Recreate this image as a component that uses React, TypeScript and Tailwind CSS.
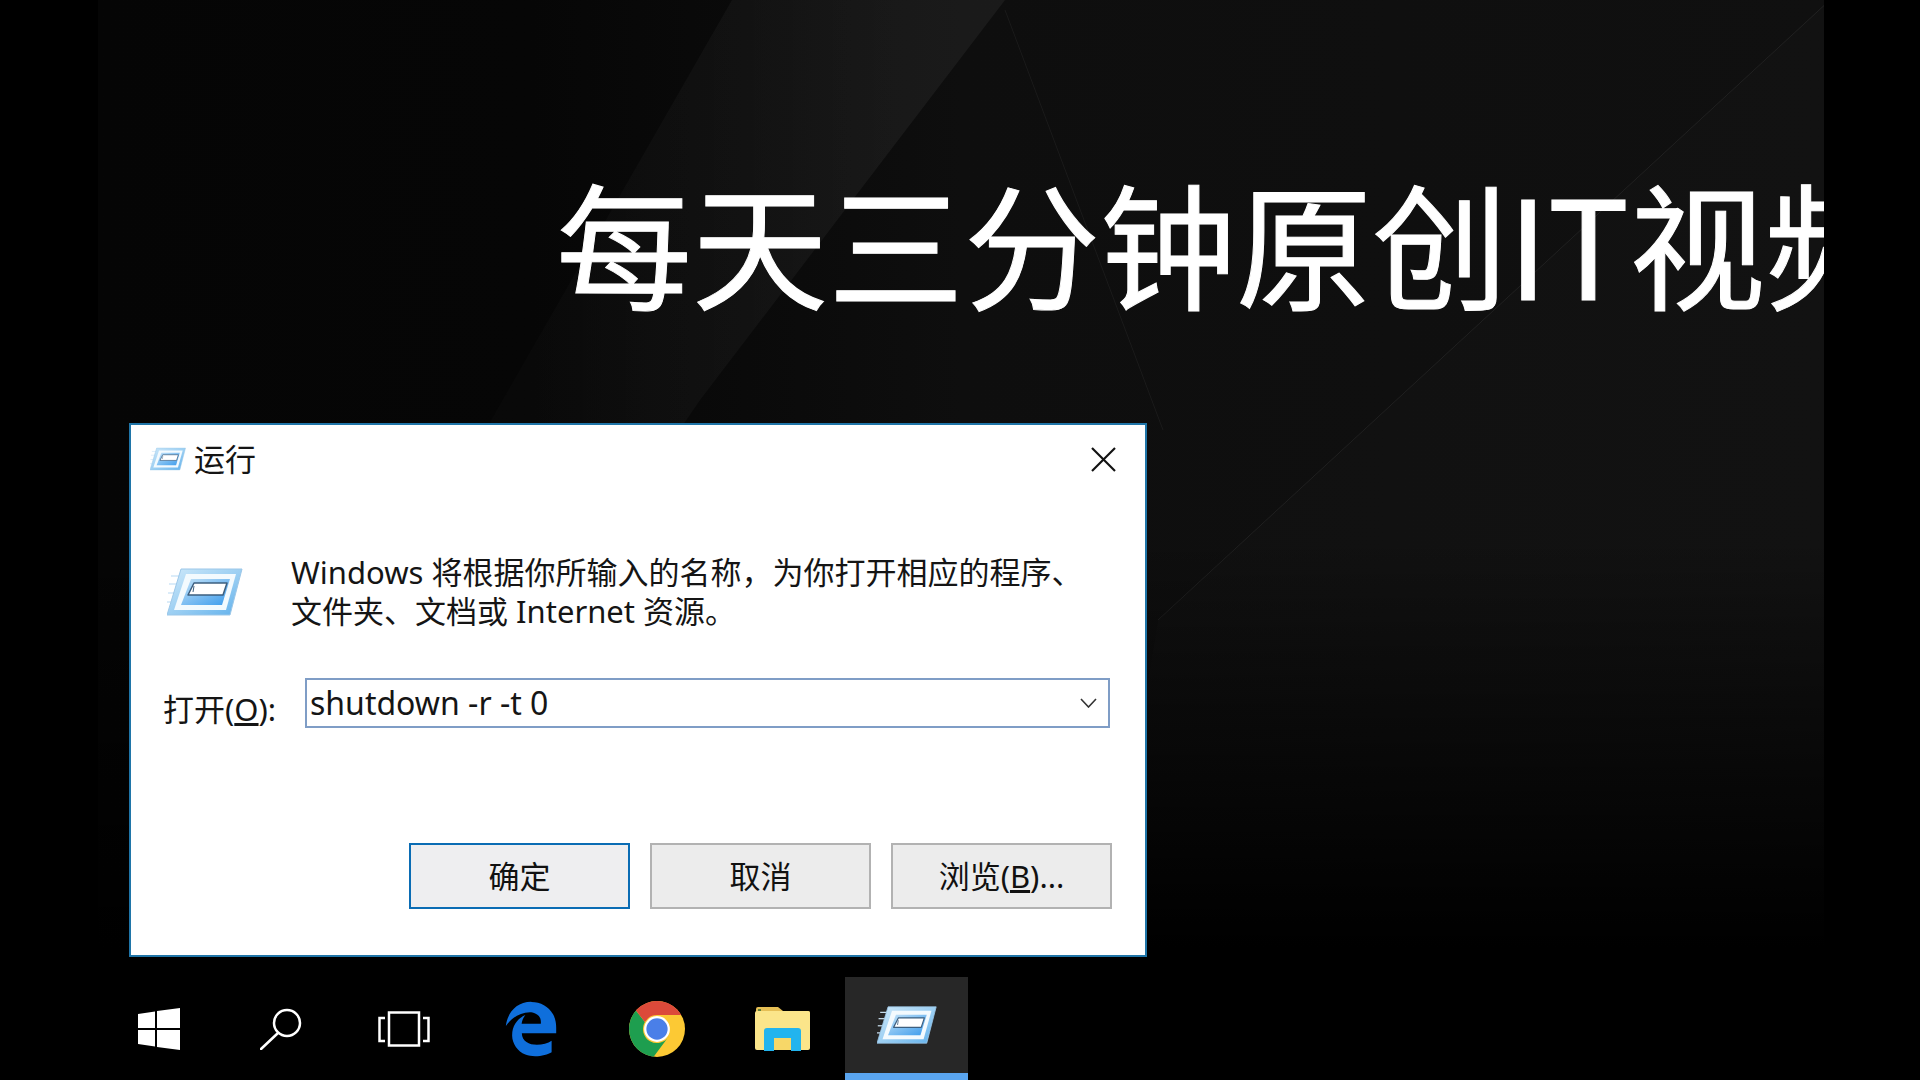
import { FaEdgeLegacy } from "react-icons/fa6";

const uiFont = "font-['Noto_Sans','Noto_Sans_CJK_SC',sans-serif]";

function Wallpaper() {
  return (
    <svg className="absolute inset-0 h-full w-full" viewBox="0 0 1726 977" aria-hidden>
      <defs>
        <linearGradient id="base" x1="0" x2="1" y1="0" y2="0">
          <stop offset="0" stopColor="#050505" />
          <stop offset="0.25" stopColor="#060606" />
          <stop offset="0.5" stopColor="#0e0e0e" />
          <stop offset="1" stopColor="#101010" />
        </linearGradient>
        <linearGradient id="beam" gradientUnits="userSpaceOnUse" x1="420" y1="200" x2="800" y2="200">
          <stop offset="0" stopColor="#fff" stopOpacity="0.012" />
          <stop offset="0.5" stopColor="#fff" stopOpacity="0.03" />
          <stop offset="1" stopColor="#fff" stopOpacity="0.05" />
        </linearGradient>
        <linearGradient id="fade" x1="0" x2="0" y1="0" y2="1">
          <stop offset="0.55" stopColor="#000" stopOpacity="0" />
          <stop offset="0.97" stopColor="#000" stopOpacity="1" />
        </linearGradient>
      </defs>
      <rect width="1726" height="977" fill="url(#base)" />
      <polygon points="634,0 907,0 602,400 520,520 340,520 395,417" fill="url(#beam)" />
      <polygon points="1732,0 1726,977 1000,977 1060,620" fill="#fff" fillOpacity="0.012" />
      <line x1="907" y1="10" x2="1065" y2="430" stroke="#fff" strokeOpacity="0.05" />
      <line x1="1732" y1="0" x2="1060" y2="620" stroke="#fff" strokeOpacity="0.07" />
      <rect width="1726" height="977" fill="url(#fade)" />
    </svg>
  );
}

function RunIcon({ className, id }: { className: string; id: string }) {
  return (
    <svg className={className} viewBox="0 0 76 48" aria-hidden>
      <defs>
        <linearGradient id={id} x1="0" x2="1" y1="0" y2="1">
          <stop offset="0" stopColor="#cfe9fa" />
          <stop offset="0.55" stopColor="#98cdf2" />
          <stop offset="1" stopColor="#5fb0ec" />
        </linearGradient>
        <linearGradient id={`${id}-in`} x1="0" x2="1" y1="0" y2="1">
          <stop offset="0" stopColor="#c4e3f8" />
          <stop offset="1" stopColor="#3b9bec" />
        </linearGradient>
      </defs>
      <g stroke="#cfe6f7" strokeWidth="1.5">
        <line x1="4" y1="8" x2="16" y2="8" />
        <line x1="2" y1="16" x2="13" y2="16" />
        <line x1="1" y1="25" x2="9" y2="25" />
        <line x1="0" y1="34" x2="6" y2="34" />
      </g>
      <polygon points="14,1 75,1 63,47 0,47" fill={`url(#${id})`} stroke="#9cc7e8" />
      <polygon points="19,6 69,6 59,42 7,42" fill="#f3fafe" />
      <polygon points="24,11 63,11 55,37 14,37" fill={`url(#${id}-in)`} />
      <polygon points="27,15 60,15 56,27 21,27" fill="#fff" stroke="#3d5f7f" strokeWidth="1.5" strokeLinejoin="round" />
      <line x1="27" y1="18" x2="26" y2="24" stroke="#3d5f7f" />
    </svg>
  );
}

function WindowsIcon() {
  return (
    <svg className="h-[42px] w-[42px]" viewBox="0 0 42 42" fill="#fff" aria-hidden>
      <polygon points="0,6 17,3.5 17,20 0,20" />
      <polygon points="19,3 42,0 42,20 19,20" />
      <polygon points="0,22 17,22 17,38.5 0,36" />
      <polygon points="19,22 42,22 42,42 19,39" />
    </svg>
  );
}

function SearchIcon() {
  return (
    <svg className="h-[42px] w-[42px]" viewBox="0 0 42 42" fill="none" stroke="#fff" strokeWidth="2.5" aria-hidden>
      <circle cx="27" cy="15" r="13" />
      <line x1="18" y1="25" x2="1" y2="41" strokeLinecap="round" />
    </svg>
  );
}

function TaskViewIcon() {
  return (
    <svg className="h-[36px] w-[52px]" viewBox="0 0 52 36" fill="none" stroke="#fff" strokeWidth="2.5" aria-hidden>
      <rect x="11" y="1.5" width="30" height="33" />
      <path d="M7 7H1.5V30H7" />
      <path d="M45 7H50.5V30H45" />
    </svg>
  );
}

function ChromeIcon() {
  return (
    <svg className="h-[56px] w-[56px]" viewBox="0 0 100 100" aria-hidden>
      <circle cx="50" cy="50" r="50" fill="#fcc934" />
      <path d="M12.5 17L28.3 37.5A25 25 0 0 0 71.65 62.5L44 99.6A50 50 0 0 1 12.5 17Z" fill="#1e9e4f" />
      <path d="M12.5 17A50 50 0 0 1 93.3 25L50 25A25 25 0 0 0 28.3 37.5Z" fill="#dc4a3a" />
      <circle cx="50" cy="50" r="23" fill="#fff" />
      <circle cx="50" cy="50" r="19" fill="#4a7fe8" />
    </svg>
  );
}

function FolderIcon() {
  return (
    <svg className="h-[44px] w-[55px]" viewBox="0 0 55 44" aria-hidden>
      <path d="M1 2Q1 0 3 0H23L28 4H53Q55 4 55 6V12H1Z" fill="#e6bf55" />
      <rect x="0" y="4" width="55" height="39" rx="2" fill="#fbe58a" />
      <path d="M9 44V24Q9 21 12 21H43Q46 21 46 24V44H36V31H19V44Z" fill="#22b4ee" />
      <rect x="19" y="31" width="17" height="12" fill="#f7d768" />
      <rect x="3" y="2" width="3" height="2" fill="#5f7f3a" />
    </svg>
  );
}

function TaskbarItem({ width, active, children }: { width: string; active?: boolean; children: React.ReactNode }) {
  return (
    <div className={`flex h-full items-center justify-center ${width} ${active ? "border-b-[7px] border-[#5aa5ef] bg-[#272727]" : ""}`}>
      {children}
    </div>
  );
}

function DialogButton({ children, primary }: { children: React.ReactNode; primary?: boolean }) {
  return (
    <button
      type="button"
      className={`flex h-[66px] w-[221px] items-center justify-center border-2 text-[31px] text-[#111] ${
        primary ? "border-[#0a6cb4] bg-[#eeeef0]" : "border-[#b2b2b2] bg-[#ececec]"
      }`}
    >
      {children}
    </button>
  );
}

function RunDialog() {
  return (
    <div className={`ml-[31px] flex h-[534px] w-[1018px] shrink-0 flex-col border-2 border-[#1f75a8] bg-white text-[#151515] ${uiFont}`}>
      <div className="flex h-[68px] shrink-0 items-center justify-between pl-[19px] pr-[29px]">
        <div className="flex items-center gap-2">
          <RunIcon id="run-small" className="h-[24px] w-[36px]" />
          <span className="text-[31px] leading-none">运行</span>
        </div>
        <svg className="h-[25px] w-[25px]" viewBox="0 0 25 25" stroke="#111" strokeWidth="2.2" aria-hidden>
          <line x1="1" y1="1" x2="24" y2="24" />
          <line x1="24" y1="1" x2="1" y2="24" />
        </svg>
      </div>

      <div className="mt-[60px] flex items-center gap-[48px] pl-[36px]">
        <RunIcon id="run-large" className="h-[48px] w-[76px] shrink-0" />
        <p className="text-[31px] leading-[39px]">
          Windows 将根据你所输入的名称，为你打开相应的程序、
          <br />
          文件夹、文档或 Internet 资源。
        </p>
      </div>

      <div className="mt-[47px] flex items-start pl-[32px]">
        <label className="w-[142px] shrink-0 pt-[6px] text-[31px] leading-[50px]">
          打开(<span className="underline">O</span>):
        </label>
        <div className="flex h-[50px] w-[805px] items-center justify-between border-2 border-[#7f9dc6] pl-[3px] pr-[11px]">
          <span className="text-[32px] leading-none">shutdown -r -t 0</span>
          <svg className="h-[10px] w-[17px]" viewBox="0 0 17 10" fill="none" stroke="#333" strokeWidth="1.6" aria-hidden>
            <path d="M1 1L8.5 9L16 1" />
          </svg>
        </div>
      </div>

      <div className="mt-[109px] flex justify-end gap-5 pr-[33px]">
        <DialogButton primary>确定</DialogButton>
        <DialogButton>取消</DialogButton>
        <DialogButton>
          <span>
            浏览(<span className="underline">B</span>)...
          </span>
        </DialogButton>
      </div>
    </div>
  );
}

export default function App() {
  return (
    <div className="flex h-screen w-screen flex-col overflow-hidden bg-black">
      <div className="relative ml-[98px] flex h-[977px] w-[1726px] shrink-0 flex-col overflow-hidden">
        <Wallpaper />
        <div className="relative flex h-full flex-col">
          <h1 className="mt-[156px] h-[170px] shrink-0 whitespace-nowrap pl-[458px] font-['Noto_Sans_CJK_SC',sans-serif] text-[136px] font-normal leading-[170px] text-white [-webkit-text-stroke:1px_#fff]">
            每天三分钟原创IT视频
          </h1>
          <div className="mt-[97px]">
            <RunDialog />
          </div>
        </div>
      </div>

      <div className="flex h-[103px] shrink-0 pl-[97px]">
        <TaskbarItem width="w-[124px]"><WindowsIcon /></TaskbarItem>
        <TaskbarItem width="w-[120px]"><SearchIcon /></TaskbarItem>
        <TaskbarItem width="w-[126px]"><TaskViewIcon /></TaskbarItem>
        <TaskbarItem width="w-[128px]"><FaEdgeLegacy className="h-[56px] w-[56px] text-[#0f6fdc]" /></TaskbarItem>
        <TaskbarItem width="w-[124px]"><ChromeIcon /></TaskbarItem>
        <TaskbarItem width="w-[126px]"><FolderIcon /></TaskbarItem>
        <TaskbarItem width="w-[123px]" active>
          <RunIcon id="run-task" className="h-[40px] w-[60px]" />
        </TaskbarItem>
      </div>
    </div>
  );
}
